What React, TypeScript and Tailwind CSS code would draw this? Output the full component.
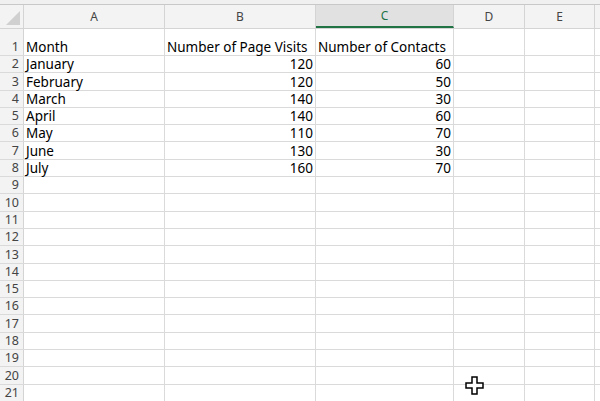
const cols = [
  { l: "A", w: 141 },
  { l: "B", w: 151 },
  { l: "C", w: 138 },
  { l: "D", w: 71 },
  { l: "E", w: 70 },
  { l: "", w: 40 },
];

const data: [string, string, string][] = [
  ["Month", "Number of Page Visits", "Number of Contacts"],
  ["January", "120", "60"],
  ["February", "120", "50"],
  ["March", "140", "30"],
  ["April", "140", "60"],
  ["May", "110", "70"],
  ["June", "130", "30"],
  ["July", "160", "70"],
];

export default function App() {
  const rows = Array.from({ length: 21 }, (_, i) => i + 1);
  return (
    <div className="relative h-[401px] w-[600px] overflow-hidden bg-white font-['Liberation_Sans'] text-[13.5px] text-black">
      <div className="h-[5px] border-b border-[#c8c8c8] bg-[#f0f0f0]" />
      <div className="flex h-[24px] border-b border-[#d4d4d4] bg-[#f3f3f3] text-[12px] text-[#444]">
        <div className="relative w-[24px] shrink-0 border-r border-[#d4d4d4]">
          <svg className="absolute bottom-[3px] right-[3px]" width="14" height="14" viewBox="0 0 14 14">
            <polygon points="14,0 14,14 0,14" fill="#d0d0d0" />
          </svg>
        </div>
        {cols.map((c) => (
          <div
            key={c.l + c.w}
            style={{ width: c.w }}
            className={`flex shrink-0 items-center justify-center border-r border-[#d4d4d4] ${
              c.l === "C" ? "border-b-2 border-b-[#217346] bg-[#e1e1e1] text-[#217346]" : ""
            }`}
          >
            {c.l}
          </div>
        ))}
      </div>
      {rows.map((r) => {
        const d = data[r - 1];
        return (
          <div
            key={r}
            className={`flex border-b border-[#dadada] ${r === 1 ? "h-[27px]" : "h-[17.3px]"}`}
          >
            <div className="flex w-[24px] shrink-0 items-end justify-end border-r border-[#d4d4d4] bg-[#f3f3f3] pr-[4px] text-[12.5px] leading-[16px] text-[#444]">
              {r}
            </div>
            {cols.map((c, ci) => (
              <div
                key={ci}
                style={{ width: c.w }}
                className={`flex shrink-0 items-end overflow-visible whitespace-nowrap border-r border-[#dadada] px-[2px] leading-[16px] ${
                  ci === 1 || ci === 2 ? (r === 1 ? "justify-start" : "justify-end") : ""
                }`}
              >
                {d && ci < 3 ? d[ci] : ""}
              </div>
            ))}
          </div>
        );
      })}
      <svg className="absolute left-[465px] top-[376px]" width="19" height="19" viewBox="0 0 19 19">
        <path
          d="M7 1h5v6h6v5h-6v6H7v-6H1V7h6z"
          fill="#fff"
          stroke="#000"
          strokeWidth="1.5"
        />
      </svg>
    </div>
  );
}
